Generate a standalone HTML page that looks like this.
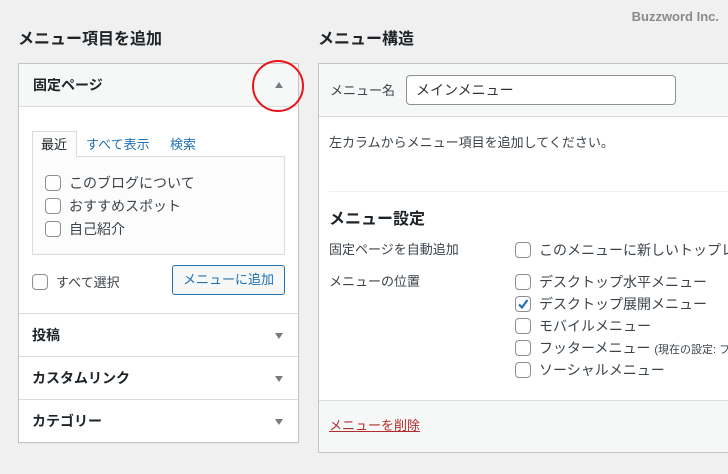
<!DOCTYPE html>
<html><head><meta charset="utf-8"><style>
*{box-sizing:border-box;margin:0;padding:0}
body{width:728px;height:474px;overflow:hidden;background:#f0f0f1;font-family:"Liberation Sans","Noto Sans CJK JP",sans-serif;color:#3c434a;font-size:13px;position:relative}
.a{position:absolute;white-space:nowrap;line-height:1.2}
.h2{font-size:16px;font-weight:bold;color:#1d2327}
.cb{position:absolute;width:16px;height:16px;border:1px solid #8c8f94;border-radius:4px;background:#fff}
.tri{position:absolute;width:0;height:0;border-left:4px solid transparent;border-right:4px solid transparent}
.dn{border-top:6px solid #787c82}
.up{border-bottom:6px solid #787c82}
.sec{position:absolute;left:19px;width:279px;border-top:1px solid #dcdcde;height:43px;background:#fff}
.sec b{position:absolute;left:13px;top:13px;font-size:14px;color:#1d2327;line-height:1.2}
</style></head><body>
<div class="a" style="right:9px;top:9px;color:#8a8a8a;font-size:13px;font-weight:bold">Buzzword Inc.</div>
<div class="a h2" style="left:18px;top:30px">メニュー項目を追加</div>
<div class="a h2" style="left:318px;top:30px">メニュー構造</div>

<div class="a" style="left:18px;top:63px;width:281px;height:380px;background:#fff;border:1px solid #c3c4c7;box-shadow:0 1px 1px rgba(0,0,0,.04)"></div>
<div class="a" style="left:19px;top:64px;width:279px;height:43px;background:#f6f7f7;border-bottom:1px solid #dcdcde"></div>
<div class="a" style="left:33px;top:77px;font-size:14px;font-weight:bold;color:#1d2327">固定ページ</div>
<div class="tri up" style="left:275px;top:82px"></div>
<div class="a" style="left:252px;top:60px;width:52px;height:52px;border:2px solid #e8141a;border-radius:50%"></div>

<div class="a" style="left:32px;top:156px;width:253px;height:99px;background:#fcfcfc;border:1px solid #dcdcde"></div>
<div class="a" style="left:32px;top:131px;width:45px;height:26px;background:#fcfcfc;border:1px solid #dcdcde;border-bottom:none"></div>
<div class="a" style="left:41px;top:137px;color:#1d2327">最近</div>
<div class="a" style="left:86px;top:137px;color:#2271b1">すべて表示</div>
<div class="a" style="left:170px;top:137px;color:#2271b1">検索</div>
<div class="cb" style="left:45px;top:175px"></div><div class="a" style="left:69px;top:175px;font-size:14px">このブログについて</div>
<div class="cb" style="left:45px;top:198px"></div><div class="a" style="left:69px;top:198px;font-size:14px">おすすめスポット</div>
<div class="cb" style="left:45px;top:221px"></div><div class="a" style="left:69px;top:221px;font-size:14px">自己紹介</div>
<div class="cb" style="left:32px;top:274px"></div><div class="a" style="left:56px;top:275px">すべて選択</div>
<div class="a" style="left:172px;top:265px;width:113px;height:30px;border:1px solid #2271b1;border-radius:3px;background:#f6f7f7;color:#2271b1;text-align:center;line-height:28px">メニューに追加</div>

<div class="sec" style="top:313px"><b>投稿</b><div class="tri dn" style="left:256px;top:19px"></div></div>
<div class="sec" style="top:356px"><b>カスタムリンク</b><div class="tri dn" style="left:256px;top:19px"></div></div>
<div class="sec" style="top:399px;height:43px"><b>カテゴリー</b><div class="tri dn" style="left:256px;top:19px"></div></div>

<div class="a" style="left:318px;top:63px;width:420px;height:390px;background:#fff;border:1px solid #c3c4c7"></div>
<div class="a" style="left:319px;top:64px;width:409px;height:53px;background:#f6f7f7;border-bottom:1px solid #dcdcde"></div>
<div class="a" style="left:330px;top:83px">メニュー名</div>
<div class="a" style="left:406px;top:75px;width:270px;height:30px;border:1px solid #8c8f94;border-radius:4px;background:#fff;padding-left:9px;line-height:28px;font-size:14px;color:#2c3338">メインメニュー</div>
<div class="a" style="left:329px;top:135px">左カラムからメニュー項目を追加してください。</div>
<div class="a" style="left:329px;top:191px;width:399px;border-top:1px solid #f0f0f1"></div>
<div class="a h2" style="left:329px;top:210px">メニュー設定</div>
<div class="a" style="left:329px;top:242px">固定ページを自動追加</div>
<div class="a" style="left:329px;top:274px">メニューの位置</div>
<div class="cb" style="left:515px;top:242px"></div>
<div class="a" style="left:539px;top:242px;font-size:14px;width:189px;height:20px;overflow:hidden">このメニューに新しいトップレベルページを自動追加</div>
<div class="cb" style="left:515px;top:274px"></div><div class="a" style="left:539px;top:274px;font-size:14px">デスクトップ水平メニュー</div>
<div class="cb" style="left:515px;top:296px"><svg width="14" height="14" viewBox="0 0 14 14" style="position:absolute;left:0;top:0"><path d="M3 7.5 L6 10.5 L11.5 3" stroke="#2271b1" stroke-width="2.2" fill="none"/></svg></div><div class="a" style="left:539px;top:296px;font-size:14px">デスクトップ展開メニュー</div>
<div class="cb" style="left:515px;top:318px"></div><div class="a" style="left:539px;top:318px;font-size:14px">モバイルメニュー</div>
<div class="cb" style="left:515px;top:340px"></div><div class="a" style="left:539px;top:340px;font-size:14px;width:189px;height:20px;overflow:hidden">フッターメニュー <span style="font-size:11px">(現在の設定: フッターメニュー)</span></div>
<div class="cb" style="left:515px;top:362px"></div><div class="a" style="left:539px;top:362px;font-size:14px">ソーシャルメニュー</div>
<div class="a" style="left:319px;top:400px;width:409px;height:52px;background:#f6f7f7;border-top:1px solid #dcdcde"></div>
<div class="a" style="left:329px;top:418px;color:#b32d2e;text-decoration:underline">メニューを削除</div>
</body></html>
